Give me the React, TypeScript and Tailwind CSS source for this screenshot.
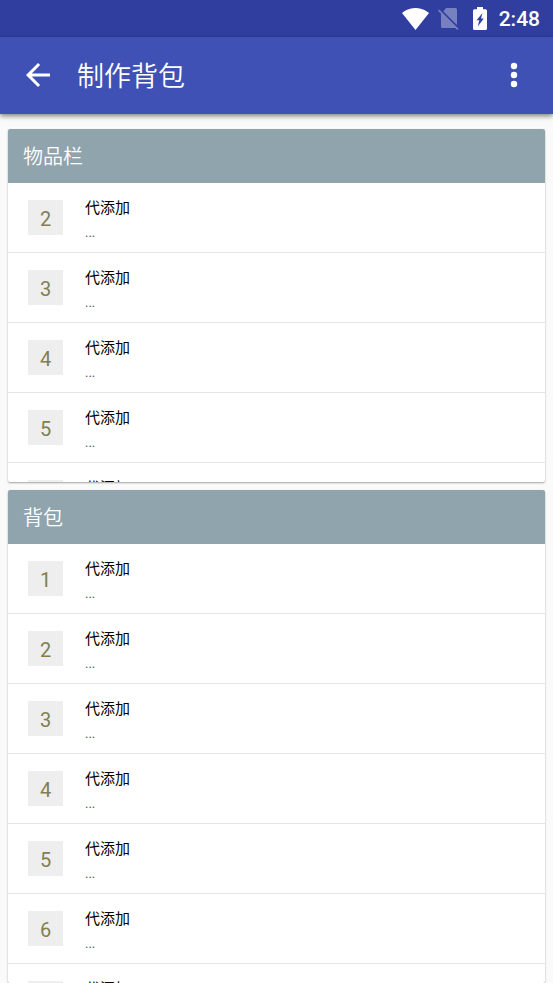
type Item = {
  slot: number;
  name: string;
  detail: string;
};

const makeItems = (from: number, to: number): Item[] =>
  Array.from({ length: to - from + 1 }, (_, i) => ({
    slot: from + i,
    name: "代添加",
    detail: "...",
  }));

const barItems = makeItems(2, 6);
const bagItems = makeItems(1, 7);

function StatusBar() {
  return (
    <div className="flex h-[37px] shrink-0 items-center justify-end bg-[#303f9f] pr-[13px] text-white">
      <svg viewBox="0 0 27 22" className="mr-[9px] h-[22px] w-[27px]" fill="currentColor" aria-hidden="true">
        <path d="M13.5 22 0 5C.5 4.600 5.700 0 13.500 0S26.500 4.600 27 5z" />
      </svg>
      <svg viewBox="0 0 22 22" className="mr-[13px] h-[22px] w-[22px]" fill="#7781bf" aria-hidden="true">
        <path d="M8 0H17.500Q19 0 19 1.500V17L5.400 3.400z" />
        <path d="M1.200 1.500 20.500 20.800 19.300 22 17.300 20H4.500Q3 20 3 18.500V5.700L0 2.700z" />
      </svg>
      <svg viewBox="0 0 14 23" className="mr-3 h-[23px] w-[14px]" fill="currentColor" aria-hidden="true">
        <path
          fillRule="evenodd"
          d="M4 0H10V2.300H12.500Q14 2.300 14 3.800V21.500Q14 23 12.500 23H1.500Q0 23 0 21.500V3.800Q0 2.300 1.500 2.300H4zM9.500 6 3.500 13.300H6.300L4.800 19.500 10.800 11.500H8z"
        />
      </svg>
      <span className="font-['Roboto'] text-[21px] leading-6 font-medium">2:48</span>
    </div>
  );
}

function AppBar({ title }: { title: string }) {
  return (
    <header className="z-10 flex h-[77px] shrink-0 items-center bg-[#3f51b5] pb-[2px] text-white shadow-[0_2px_5px_rgba(0,0,0,0.5)]">
      <button type="button" aria-label="返回" className="flex h-full w-[76px] items-center justify-center">
        <svg viewBox="4 4 16 16" className="h-6 w-6" fill="currentColor" aria-hidden="true">
          <path d="M20 11H7.830l5.590-5.590L12 4l-8 8 8 8 1.410-1.410L7.830 13H20v-2z" />
        </svg>
      </button>
      <h1 className="flex-1 pl-px text-[27px] leading-10 font-[350]">{title}</h1>
      <button type="button" aria-label="更多" className="flex h-full w-[78px] items-center justify-center">
        <svg viewBox="0 0 8 26" className="h-[26px] w-2" fill="currentColor" aria-hidden="true">
          <circle cx="4" cy="4" r="3.200" />
          <circle cx="4" cy="13" r="3.200" />
          <circle cx="4" cy="22" r="3.200" />
        </svg>
      </button>
    </header>
  );
}

function ItemRow({ item }: { item: Item }) {
  return (
    <li className="flex h-[70px] border-b border-[#e6e6e6] pl-5">
      <div className="mt-[17px] flex size-[35px] items-center justify-center bg-[#eeeeee] pt-[2px] font-['Roboto'] text-[20px] leading-6 text-[#827f4f]">
        {item.slot}
      </div>
      <div className="ml-[22px] pt-3">
        <p className="text-[15px] leading-6 text-black">{item.name}</p>
        <p className="font-['Roboto'] text-[13px] leading-7 text-[#555555]">{item.detail}</p>
      </div>
    </li>
  );
}

function ItemCard(props: { title: string; items: Item[]; className: string }) {
  return (
    <section
      className={`flex flex-col overflow-hidden rounded-[2px] bg-white shadow-[0_1px_2px_rgba(0,0,0,0.35)] ${props.className}`}
    >
      <h2 className="flex h-[54px] shrink-0 items-center bg-[#90a4ad] px-[15px] text-[20px] font-[350] text-white">
        {props.title}
      </h2>
      <ul className="min-h-0 flex-1 overflow-hidden">
        {props.items.map((item) => (
          <ItemRow key={item.slot} item={item} />
        ))}
      </ul>
    </section>
  );
}

export default function App() {
  return (
    <div className="flex h-screen flex-col overflow-hidden bg-[#fafafa] font-['Noto_Sans_CJK_SC',sans-serif]">
      <StatusBar />
      <AppBar title="制作背包" />
      <main className="flex min-h-0 flex-1 flex-col gap-2 px-2 pt-[15px]">
        <ItemCard title="物品栏" items={barItems} className="h-[353px] shrink-0" />
        <ItemCard title="背包" items={bagItems} className="min-h-0 flex-1" />
      </main>
    </div>
  );
}
